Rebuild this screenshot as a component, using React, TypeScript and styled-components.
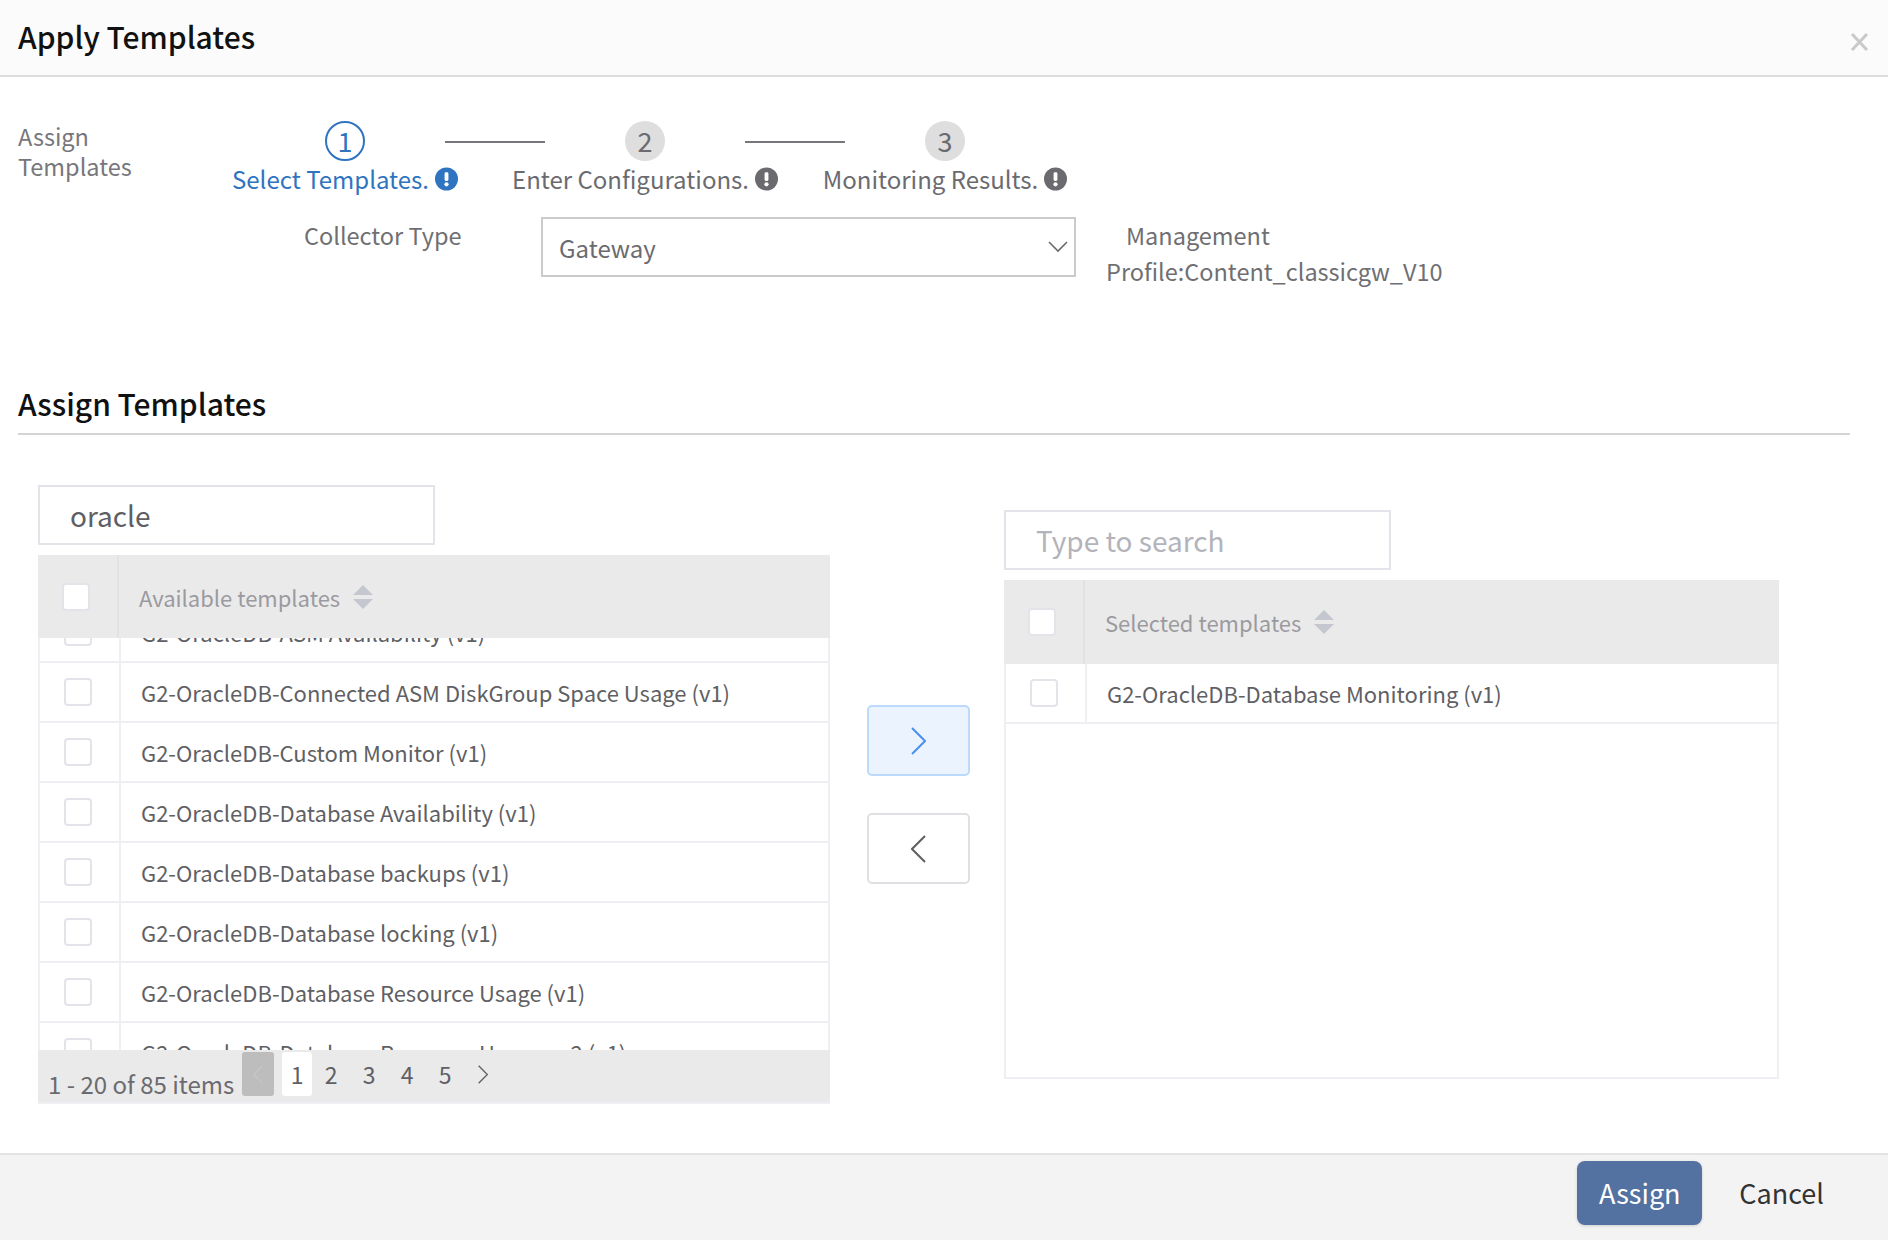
import React from "react";
import styled, { createGlobalStyle } from "styled-components";

const GlobalStyle = createGlobalStyle`
  html, body {
    margin: 0;
    padding: 0;
    background: #fff;
    font-family: "Noto Sans CJK SC", "Noto Sans", sans-serif;
    color: #6b6b6f;
  }
  * { box-sizing: border-box; }
`;

const Page = styled.div`
  width: 1888px;
  height: 1240px;
  display: flex;
  flex-direction: column;
  overflow: hidden;
`;

const Header = styled.header`
  height: 77px;
  flex: none;
  background: #fbfbfb;
  border-bottom: 2px solid #dcdcdc;
  display: flex;
  align-items: center;
  justify-content: space-between;
  padding: 0 19px 0 18px;
`;

const ModalTitle = styled.h1`
  margin: 0 0 3px;
  font-size: 30px;
  line-height: 40px;
  font-weight: 500;
  color: #111;
`;

const CloseButton = styled.svg`
  width: 19px;
  height: 18px;
  margin-top: 8px;
  stroke: #c9c9c9;
  stroke-width: 3;
  fill: none;
`;

const Body = styled.main`
  flex: 1;
  padding: 44px 38px 0 18px;
`;

const StepRow = styled.div`
  display: flex;
  height: 80px;
`;

const StepCaption = styled.div`
  width: 177px;
  font-size: 23.5px;
  line-height: 30px;
  color: #77777b;
`;

const Stepper = styled.div`
  display: flex;
  flex-direction: column;
`;

const CircleRow = styled.div`
  display: flex;
  align-items: center;
  gap: 80px;
  padding-left: 130px;
`;

const Circle = styled.div<{ $active?: boolean }>`
  width: 40px;
  height: 40px;
  border-radius: 50%;
  display: flex;
  align-items: center;
  justify-content: center;
  font-size: 27px;
  line-height: 40px;
  color: ${(props) => (props.$active ? "#2f74c0" : "#6b6b6f")};
  background: ${(props) => (props.$active ? "#fff" : "#dedede")};
  border: ${(props) => (props.$active ? "2px solid #2f74c0" : "none")};
`;

const Connector = styled.div`
  width: 100px;
  height: 2px;
  background: #77777b;
  margin-top: 2px;
`;

const LabelRow = styled.div`
  display: flex;
  margin-top: 3px;
`;

const StepLabel = styled.div<{ $active?: boolean }>`
  width: 300px;
  display: flex;
  align-items: center;
  justify-content: center;
  gap: 6px;
  font-size: 24px;
  line-height: 30px;
  color: ${(props) => (props.$active ? "#2f74c0" : "#6b6b6f")};
`;

const AlertIcon = styled.svg<{ $active?: boolean }>`
  width: 23px;
  height: 24px;
  flex: none;
  fill: ${(props) => (props.$active ? "#2f74c0" : "#6b6b6f")};
`;

const CollectorRow = styled.div`
  display: flex;
  align-items: flex-start;
  margin-top: 16px;
  height: 166px;
`;

const FieldLabel = styled.label`
  width: 237px;
  margin-left: 286px;
  font-size: 23.5px;
  line-height: 36px;
  color: #6f6f73;
`;

const SelectBox = styled.div`
  width: 535px;
  height: 60px;
  border: 2px solid #cbcbcb;
  display: flex;
  align-items: center;
  justify-content: space-between;
  padding: 0 6px 0 16px;
  font-size: 24px;
  color: #6b6b6f;
`;

const ProfileNote = styled.div`
  width: 340px;
  margin-left: 30px;
  font-size: 23.5px;
  line-height: 36px;
  text-indent: 20px;
  color: #6f6f73;
`;

const SectionTitle = styled.h2`
  margin: 0;
  font-size: 30px;
  line-height: 40px;
  font-weight: 500;
  color: #111;
  padding-bottom: 10px;
  border-bottom: 2px solid #d4d4d4;
`;

const Transfer = styled.div`
  display: flex;
  align-items: flex-start;
  margin-top: 50px;
  padding-left: 20px;
`;

const ListPanel = styled.section<{ $offset?: number; $width: number }>`
  width: ${(props) => props.$width}px;
  margin-top: ${(props) => props.$offset || 0}px;
  flex: none;
`;

const SearchBox = styled.div<{ $width: number; $placeholder?: boolean }>`
  width: ${(props) => props.$width}px;
  height: 60px;
  border: 2px solid #e3e3e9;
  display: flex;
  align-items: center;
  padding-left: 30px;
  font-size: 28px;
  color: ${(props) => (props.$placeholder ? "#b3b3ba" : "#5e5e63")};
  margin-bottom: 10px;
`;

const Grid = styled.div<{ $height?: number }>`
  display: flex;
  flex-direction: column;
  height: ${(props) => (props.$height ? `${props.$height}px` : "auto")};
  border-left: 2px solid #eeeef3;
  border-right: 2px solid #eeeef3;
  border-bottom: 2px solid #eeeef3;
`;

const HeadRow = styled.div<{ $height: number }>`
  height: ${(props) => props.$height}px;
  flex: none;
  display: flex;
  background: #eaeaeb;
  margin: 0 -2px;
  font-size: 22px;
  color: #9a9a9f;
  position: relative;
`;

const CheckCell = styled.div<{ $head?: boolean }>`
  width: 81px;
  flex: none;
  display: flex;
  align-items: center;
  justify-content: center;
  border-right: 2px solid ${(props) => (props.$head ? "#e2e2e4" : "#eeeef3")};
  padding-right: 4px;
`;

const Check = styled.span`
  width: 28px;
  height: 28px;
  border: 2px solid #e3e3e9;
  border-radius: 4px;
  background: #fff;
`;

const HeadLabel = styled.div`
  display: flex;
  align-items: center;
  gap: 13px;
  padding-left: 20px;
  line-height: 30px;
`;

const SortIcon = styled.svg`
  width: 20px;
  height: 24px;
  fill: #c4c7d0;
`;

const ScrollArea = styled.div<{ $overlap?: number }>`
  flex: 1;
  overflow: hidden;
  min-height: 0;
`;

const RowList = styled.div<{ $shift?: number }>`
  margin-top: ${(props) => props.$shift || 0}px;
`;

const Row = styled.div`
  height: 60px;
  display: flex;
  border-bottom: 2px solid #eeeef3;
`;

const RowLabel = styled.div`
  display: flex;
  align-items: center;
  padding-left: 20px;
  font-size: 22px;
  color: #5f5f64;
`;

const Pager = styled.div`
  height: 52px;
  flex: none;
  margin: 0 -2px;
  background: #eaeaeb;
  display: flex;
  align-items: flex-start;
  padding: 2px 0 0 10px;
`;

const PagerInfo = styled.div`
  font-size: 24px;
  line-height: 30px;
  margin: 17px 8px 0 0;
  color: #6b6b6f;
`;

const PageBtn = styled.div<{ $current?: boolean; $disabled?: boolean }>`
  width: ${(props) => (props.$disabled ? 32 : props.$current ? 30 : 38)}px;
  height: 44px;
  display: flex;
  align-items: center;
  justify-content: center;
  font-size: 23px;
  color: #5f5f64;
  border-radius: 3px;
  background: ${(props) =>
    props.$disabled ? "#bdbdbd" : props.$current ? "#fff" : "transparent"};
  margin-right: ${(props) => (props.$disabled ? 8 : 0)}px;
`;

const ShuttleColumn = styled.div`
  width: 103px;
  margin: 220px 34px 0 37px;
  flex: none;
  display: flex;
  flex-direction: column;
  gap: 37px;
`;

const ShuttleButton = styled.div<{ $primary?: boolean }>`
  height: 71px;
  border-radius: 5px;
  display: flex;
  align-items: center;
  justify-content: center;
  background: ${(props) => (props.$primary ? "#ebf3fe" : "#fff")};
  border: 2px solid ${(props) => (props.$primary ? "#bcdafb" : "#e0e0e4")};
`;

const Footer = styled.footer`
  height: 87px;
  flex: none;
  background: #f3f3f3;
  border-top: 2px solid #e4e4e4;
  display: flex;
  align-items: center;
  justify-content: flex-end;
  padding: 0 64px 10px 0;
`;

const AssignButton = styled.div`
  width: 125px;
  height: 64px;
  border-radius: 8px;
  background: #5371a1;
  box-shadow: 0 1px 3px rgba(0, 0, 0, 0.15);
  color: #fff;
  font-size: 27px;
  display: flex;
  align-items: center;
  justify-content: center;
`;

const CancelButton = styled.div`
  margin-left: 37px;
  font-size: 27px;
  color: #333;
`;

const Chevron = ({ dir, color, w = 15, h = 28 }: { dir: "left" | "right"; color: string; w?: number; h?: number }) => (
  <svg width={w} height={h} viewBox="0 0 15 28" fill="none" stroke={color} strokeWidth="2">
    <path d={dir === "right" ? "M1 1l13 13L1 27" : "M14 1L1 14l13 13"} />
  </svg>
);

const Alert = ({ active }: { active?: boolean }) => (
  <AlertIcon $active={active} viewBox="0 0 24 24">
    <circle cx="12" cy="12" r="12" />
    <rect x="10" y="5" width="4" height="9" rx="1.5" fill="#fff" />
    <circle cx="12" cy="17.5" r="2.2" fill="#fff" />
  </AlertIcon>
);

const Sort = () => (
  <SortIcon viewBox="0 0 20 24">
    <path d="M10 0l10 10H0z" />
    <path d="M0 14h20L10 24z" />
  </SortIcon>
);

const available = [
  "G2-OracleDB-ASM Availability (v1)",
  "G2-OracleDB-Connected ASM DiskGroup Space Usage (v1)",
  "G2-OracleDB-Custom Monitor (v1)",
  "G2-OracleDB-Database Availability (v1)",
  "G2-OracleDB-Database backups (v1)",
  "G2-OracleDB-Database locking (v1)",
  "G2-OracleDB-Database Resource Usage (v1)",
  "G2-OracleDB-Database Resource Usage - v2 (v1)",
];

export default function App() {
  return (
    <Page>
      <GlobalStyle />
      <Header>
        <ModalTitle>Apply Templates</ModalTitle>
        <CloseButton viewBox="0 0 19 18">
          <path d="M2 1l15 16M17 1L2 17" />
        </CloseButton>
      </Header>
      <Body>
        <StepRow>
          <StepCaption>Assign Templates</StepCaption>
          <Stepper>
            <CircleRow>
              <Circle $active>1</Circle>
              <Connector />
              <Circle>2</Circle>
              <Connector />
              <Circle>3</Circle>
            </CircleRow>
            <LabelRow>
              <StepLabel $active>
                Select Templates. <Alert active />
              </StepLabel>
              <StepLabel>
                Enter Configurations. <Alert />
              </StepLabel>
              <StepLabel>
                Monitoring Results. <Alert />
              </StepLabel>
            </LabelRow>
          </Stepper>
        </StepRow>
        <CollectorRow>
          <FieldLabel>Collector Type</FieldLabel>
          <SelectBox>
            Gateway
            <svg width="20" height="12" viewBox="0 0 20 12" fill="none" stroke="#6b6b6f" strokeWidth="1.6">
              <path d="M1 1l9 9 9-9" />
            </svg>
          </SelectBox>
          <ProfileNote>Management Profile:Content_classicgw_V10</ProfileNote>
        </CollectorRow>
        <SectionTitle>Assign Templates</SectionTitle>
        <Transfer>
          <ListPanel $width={792}>
            <SearchBox $width={397}>oracle</SearchBox>
            <Grid $height={549}>
              <HeadRow $height={83}>
                <CheckCell $head>
                  <Check />
                </CheckCell>
                <HeadLabel>
                  Available templates <Sort />
                </HeadLabel>
              </HeadRow>
              <ScrollArea>
                <RowList $shift={-35}>
                  {available.map((name) => (
                    <Row key={name}>
                      <CheckCell>
                        <Check />
                      </CheckCell>
                      <RowLabel>{name}</RowLabel>
                    </Row>
                  ))}
                </RowList>
              </ScrollArea>
              <Pager>
                <PagerInfo>1 - 20 of 85 items</PagerInfo>
                <PageBtn $disabled>
                  <Chevron dir="left" color="#c6c6c6" w={10} h={19} />
                </PageBtn>
                <PageBtn $current>1</PageBtn>
                <PageBtn>2</PageBtn>
                <PageBtn>3</PageBtn>
                <PageBtn>4</PageBtn>
                <PageBtn>5</PageBtn>
                <PageBtn>
                  <Chevron dir="right" color="#5f5f64" w={10} h={19} />
                </PageBtn>
              </Pager>
            </Grid>
          </ListPanel>
          <ShuttleColumn>
            <ShuttleButton $primary>
              <Chevron dir="right" color="#4a90f0" />
            </ShuttleButton>
            <ShuttleButton>
              <Chevron dir="left" color="#5f5f64" />
            </ShuttleButton>
          </ShuttleColumn>
          <ListPanel $width={775} $offset={25}>
            <SearchBox $width={387} $placeholder>
              Type to search
            </SearchBox>
            <Grid $height={499}>
              <HeadRow $height={84}>
                <CheckCell $head>
                  <Check />
                </CheckCell>
                <HeadLabel>
                  Selected templates <Sort />
                </HeadLabel>
              </HeadRow>
              <Row>
                <CheckCell>
                  <Check />
                </CheckCell>
                <RowLabel>G2-OracleDB-Database Monitoring (v1)</RowLabel>
              </Row>
            </Grid>
          </ListPanel>
        </Transfer>
      </Body>
      <Footer>
        <AssignButton>Assign</AssignButton>
        <CancelButton>Cancel</CancelButton>
      </Footer>
    </Page>
  );
}
